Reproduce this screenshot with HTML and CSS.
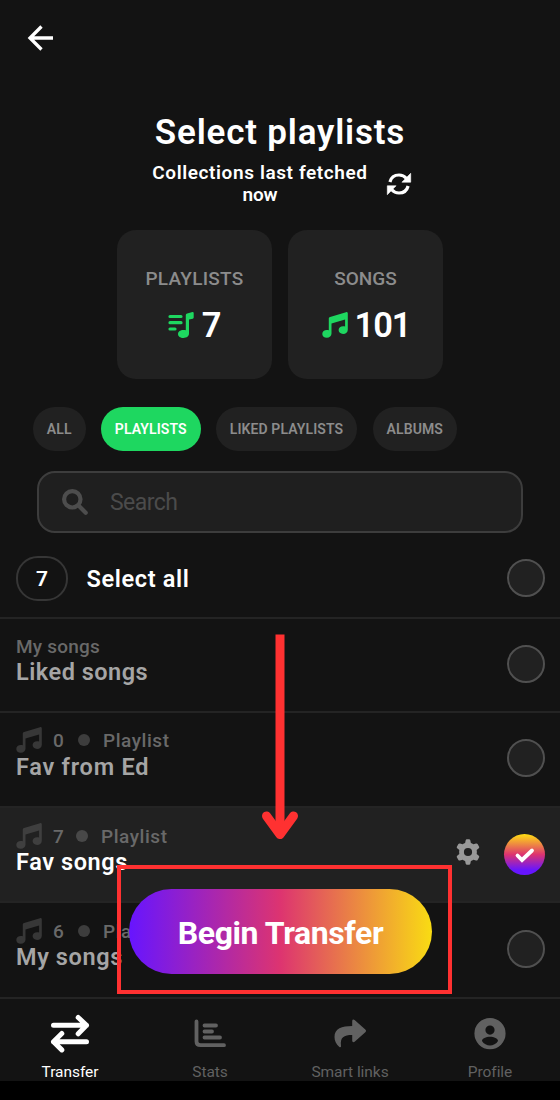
FILE: index.html
```html
<!DOCTYPE html>
<html lang="en">
<head>
<meta charset="utf-8">
<title>Select playlists</title>
<link rel="stylesheet" href="styles.css">
</head>
<body>
<svg class="defs" width="0" height="0" aria-hidden="true">
  <symbol id="note" viewBox="0 0 26 26">
    <path fill="currentColor" d="M24 .2c1-.3 1.800.3 1.800 1.300V17.800c0 2.600-2 4.200-4.700 4.200s-4.500-1.600-4.500-3.900 2-3.900 4.500-3.900c.8 0 1.400.1 2 .3V7.400L9.500 11.500v10c0 2.600-2 4.200-4.700 4.200S.3 24.100.3 21.900 2.300 18 4.800 18c.7 0 1.400.1 2 .3V6.800c0-.9.5-1.500 1.300-1.700z"/>
  </symbol>
</svg>
<main class="screen">
  <header class="topbar">
    <svg class="back" viewBox="0 0 26 26"><path d="M25 13H3M13.500 1.500 2 13l11.500 11.500"/></svg>
  </header>
  <h1 class="title">Select playlists</h1>
  <div class="fetched">
    <p class="fetched-text">Collections last fetched<br><span class="now">now</span></p>
    <svg class="refresh" viewBox="0 0 24 22"><path class="stroke" d="M2.900 9C4 4.800 7.500 2 12 2c3 0 5.600 1.300 7.500 3.500M21.100 13c-1.100 4.200-4.600 7-9.100 7-3 0-5.600-1.300-7.500-3.500"/><path class="solid" d="M23.700.3V9.200h-8.800zM.3 21.700v-8.900h8.800z"/></svg>
  </div>
  <section class="stats">
    <div class="stat"><div class="stat-name">PLAYLISTS</div>
      <div class="stat-value"><svg class="stat-icon" viewBox="0 0 26 26"><path class="bars" d="M2 4.500h11M2 10.700h11M2 17h5"/><path fill="currentColor" d="M24.500.1c.7-.1 1.200.2 1.200.9v4.600c0 .6-.4 1-.9 1.100l-3.800.9v13.900c0 2.500-2.200 4.400-5.600 4.400-3.100 0-5.400-1.600-5.400-4s2.300-4 5.400-4c1 0 1.700.1 2.400.4V3.200c0-1 .5-1.600 1.400-1.800z"/></svg><span>7</span></div></div>
    <div class="stat"><div class="stat-name songs-name">SONGS</div>
      <div class="stat-value songs-value"><svg class="stat-icon"><use href="#note"/></svg><span class="hundred">101</span></div></div>
  </section>
  <nav class="chips">
    <span class="chip chip-all">ALL</span><span class="chip chip-playlists active">PLAYLISTS</span><span class="chip chip-liked">LIKED PLAYLISTS</span><span class="chip chip-albums">ALBUMS</span>
  </nav>
  <div class="search">
    <svg class="search-icon" viewBox="0 0 26 26"><circle cx="10.300" cy="10.300" r="8.200"/><path d="m16.500 16.500 7.200 7.200"/></svg>
    <span>Search</span>
  </div>
  <section class="list">
    <div class="select-all"><span class="count">7</span><span class="select-label">Select all</span><i class="radio"></i></div>
    <div class="row row-liked"><div class="info"><div class="meta my-meta">My songs</div><div class="name liked-name">Liked songs</div></div><i class="radio"></i></div>
    <div class="row row-ed"><div class="info"><div class="meta"><svg class="note"><use href="#note"/></svg><span class="number">0</span><i class="dot"></i><span>Playlist</span></div><div class="name ed-name">Fav from Ed</div></div><i class="radio"></i></div>
    <div class="row row-fav"><div class="info"><div class="meta"><svg class="note"><use href="#note"/></svg><span class="number narrow">7</span><i class="dot"></i><span>Playlist</span></div><div class="name fav-name">Fav songs</div></div>
      <svg class="gear" viewBox="0 0 24 26"><path fill-rule="evenodd" d="M9.700 1.300C9.900.5 10.400.2 11 .2h2c.7 0 1.100.4 1.300 1.100l.6 2.700c.9.300 1.700.8 2.400 1.300l2.700-.8c.7-.2 1.200 0 1.600.6l1.400 2.400c.4.7.3 1.200-.2 1.700l-2.100 1.900a10 10 0 0 1 0 3.800l2.100 1.900c.5.5.6 1 .2 1.700l-1.400 2.400c-.4.6-.9.800-1.600.6l-2.700-.8c-.7.500-1.500 1-2.400 1.300l-.6 2.700c-.2.700-.6 1.100-1.300 1.100h-2c-.6 0-1.100-.4-1.300-1.100L9.100 22c-.9-.3-1.700-.8-2.400-1.300l-2.700.8c-.7.2-1.200 0-1.600-.6L1 18.500c-.4-.7-.3-1.200.2-1.700l2.100-1.900a10 10 0 0 1 0-3.800L1.200 9.200C.7 8.700.6 8.200 1 7.500l1.400-2.400C2.800 4.500 3.300 4.300 4 4.500l2.700.8c.7-.5 1.500-1 2.400-1.300zM12 8.900a4.100 4.100 0 1 0 0 8.200 4.100 4.100 0 0 0 0-8.200z"/></svg>
      <span class="checked"><svg viewBox="0 0 20 16"><path d="m2.500 8.500 4.500 4.500L17 3.500"/></svg></span></div>
    <div class="row row-my"><div class="info"><div class="meta"><svg class="note"><use href="#note"/></svg><span class="number">6</span><i class="dot"></i><span>Playlist</span></div><div class="name my-name">My songs</div></div><i class="radio"></i></div>
  </section>
  <nav class="tabs">
    <div class="tab current"><svg class="tab-icon" viewBox="0 0 40 40"><path class="line4" d="M3.500 12.300h33M28.200 4.500l8.300 7.800-8.300 8.500M36.500 28.700h-33M11.800 20.500l-8.300 8.200 8.300 8.200"/></svg><span>Transfer</span></div>
    <div class="tab"><svg class="tab-icon" viewBox="0 0 40 40"><path class="line4" d="M6.500 8.500v20q0 3.700 4 3.700H34M14.500 12.500h11.500M14.500 18.500h7.500M14.500 24.500h15.500"/></svg><span class="stats-label">Stats</span></div>
    <div class="tab"><svg class="tab-icon" viewBox="0 0 40 40"><path fill="currentColor" d="M22.200 8.200c0-1.700 1.200-2.200 2.400-1.200l10.700 9.500c1 .9 1 1.800 0 2.700l-10.700 9.500c-1.200 1-2.400.4-2.400-1.200v-5.400c-8.300 0-12.200 2.100-11.200 11 .1 1.200-.8 1.500-1.600.8C6 31 4.500 27.600 4.500 24c0-8.500 7.300-10.900 17.700-11z"/></svg><span class="links-label">Smart links</span></div>
    <div class="tab"><svg class="tab-icon" viewBox="0 0 40 40"><path fill="currentColor" fill-rule="evenodd" d="M20 5a15.600 15.600 0 1 0 0 31.200A15.600 15.600 0 0 0 20 5zm0 7.500a4.600 4.600 0 1 1 0 9.200 4.600 4.600 0 0 1 0-9.200zm0 11.300c4 0 8 1.800 8 4.200-1.600 2.800-5 4.500-8 4.500s-6.400-1.700-8-4.500c0-2.400 4-4.200 8-4.200z"/></svg><span>Profile</span></div>
  </nav>
  <button class="begin"><span>Begin Transfer</span></button>
  <div class="highlight"></div>
  <svg class="arrow" viewBox="0 0 40 210"><path class="shaft" d="M20 4.500V198"/><path class="head" d="m6.500 186 13.500 18.500L33.500 186"/></svg>
</main>
</body>
</html>
```
FILE: styles.css
```css
* { box-sizing: border-box; }
body { margin: 0; background: #000; font-family: Roboto, "Liberation Sans", sans-serif; font-weight: 600; color: #fff; }
.defs { position: absolute; }
.screen { position: relative; width: 560px; height: 1100px; overflow: hidden; background: linear-gradient(#131313 1081px, #000 1081px); }
svg { display: block; overflow: visible; flex: none; }
i { flex: none; }
.topbar { height: 112px; padding: 25px 28px; }
.back { width: 26px; height: 26px; fill: none; stroke: #fff; stroke-width: 3.300; }
.title { margin: 0; height: 48px; font-size: 35px; font-weight: 600; line-height: 42px; text-align: center; letter-spacing: .8px; white-space: nowrap; }
.fetched { display: flex; align-items: center; height: 48px; padding-left: 151px; gap: 18px; }
.fetched-text { margin: 0; width: 218px; font-size: 19px; line-height: 22px; letter-spacing: .6px; text-align: center; white-space: nowrap; }
.now { letter-spacing: -.1px; }
.refresh { width: 24px; height: 22px; }
.refresh .stroke { fill: none; stroke: #fff; stroke-width: 3.200; }
.refresh .solid { fill: #fff; stroke: #fff; stroke-width: .6; stroke-linejoin: round; }
.stats { display: flex; justify-content: center; gap: 16px; margin-top: 22px; height: 149px; }
.stat { width: 155px; border-radius: 19px; background: #212121; padding-top: 36px; text-align: center; }
.stat-name { height: 24px; color: #8c8c8c; font-size: 19px; font-weight: 500; line-height: 25px; letter-spacing: .25px; }
.songs-name { letter-spacing: 0; }
.stat-value { display: flex; align-items: center; justify-content: center; gap: 8px; height: 40px; margin-top: 15px; font-size: 34.500px; line-height: 40px; }
.songs-value { padding-left: 1px; gap: 7px; }
.hundred { letter-spacing: -1.100px; }
.stat-icon { width: 26px; height: 26px; color: #1ed760; }
.bars { fill: none; stroke: #1ed760; stroke-width: 3.200; stroke-linecap: round; }
.chips { display: flex; margin: 28px 0 20px 33px; height: 44px; font-size: 14px; gap: 15.500px; letter-spacing: .1px; }
.chip { display: flex; align-items: center; justify-content: center; border-radius: 22px; background: #212121; color: #8c8c8c; white-space: nowrap; }
.chip-all { width: 52.500px; }
.chip-playlists { width: 99.500px; }
.chip-liked { width: 141px; }
.chip-albums { width: 84.500px; }
.active { background: #1ed760; color: #fff; }
.search { display: flex; align-items: center; height: 62px; margin: 0 37px; padding-left: 23px; gap: 22px; border: 2px solid #3d3d3d; border-radius: 18px; background: #1f1f1f; color: #4b4b4b; font-size: 23px; font-weight: 400; letter-spacing: -.55px; }
.search-icon { width: 26px; height: 26px; fill: none; stroke: #4d4d4d; stroke-width: 4.200; stroke-linecap: round; }
.list { margin-top: 6px; }
.select-all { display: flex; align-items: center; height: 80px; padding: 0 15px 0 16px; border-bottom: 2px solid #242424; }
.count { display: flex; align-items: center; justify-content: center; width: 52px; height: 45px; margin-top: 1px; border: 2px solid #363636; border-radius: 22px; font-size: 21px; }
.select-label { margin-left: 18.500px; padding-top: 1px; font-size: 23.500px; letter-spacing: .65px; }
.radio { width: 38px; height: 38px; margin-left: auto; border: 2px solid #505050; border-radius: 50%; background: #212121; }
.row { display: flex; align-items: center; padding: 0 15px 0 16px; height: 95px; border-bottom: 2px solid #242424; }
.row-liked { height: 94px; padding-bottom: 3px; }
.row-ed { padding-bottom: 4px; }
.row-fav { background: #212121; }
.row-my { height: 96px; padding-bottom: 3px; }
.info { align-self: flex-start; padding-top: 14px; }
.row-fav .info, .row-my .info { padding-top: 15px; }
.meta { display: flex; align-items: center; height: 26px; color: #696969; font-size: 19px; font-weight: 500; letter-spacing: .55px; white-space: nowrap; }
.my-meta { letter-spacing: .2px; }
.note { width: 26px; height: 26px; color: #373737; }
.number { margin-left: 11px; width: 13px; }
.dot { width: 12px; height: 12px; margin: 0 13px 0 12px; border-radius: 50%; background: #3d3d3d; }
.narrow { width: 11px; }
.name { height: 26px; font-size: 23.500px; line-height: 27px; letter-spacing: .5px; color: #a5a5a5; white-space: nowrap; }
.ed-name { line-height: 28px; letter-spacing: .75px; }
.fav-name, .my-name { line-height: 27px; letter-spacing: .6px; }
.row-fav .name { color: #fff; }
.row-fav .note { color: #3f3f3f; }
.row-fav .dot { background: #484848; }
.gear { width: 24px; height: 26px; margin-left: auto; fill: #999; margin-bottom: 6px; }
.checked { display: flex; align-items: center; justify-content: center; width: 41px; height: 41px; margin-left: 24px; border-radius: 50%; background: linear-gradient(#ffdf12, #dd3470 50%, #6715ff 88%); }
.checked svg { width: 20px; height: 16px; fill: none; stroke: #fff; stroke-width: 3.800; stroke-linecap: round; stroke-linejoin: miter; }
.tabs { display: grid; grid-template-columns: repeat(4, 140px); height: 82px; }
.tab { display: flex; flex-direction: column; align-items: center; padding-top: 14px; color: #616161; font-size: 15.500px; font-weight: 400; line-height: 20px; letter-spacing: -.05px; }
.tab span { margin-top: 9px; white-space: nowrap; }
.tab-icon { width: 40px; height: 40px; }
.line4 { fill: none; stroke: currentColor; stroke-width: 3.800; stroke-linecap: round; stroke-linejoin: round; }
.current { color: #fff; }
.current .line4 { stroke-width: 5; }
/* The floating action and its callout lie over the list. */
.begin { position: absolute; left: 129px; top: 889px; width: 303px; height: 85px; border: 0; border-radius: 43px; padding: 3px 0 0; color: #fff; background: linear-gradient(90deg, #6715ff, #dd3470 50%, #f9dc13); font: 700 32px Roboto, sans-serif; letter-spacing: -.4px; white-space: nowrap; }
.highlight { position: absolute; left: 117px; top: 865px; width: 335px; height: 129px; border: 4.500px solid #ff3131; }
.arrow { position: absolute; left: 260px; top: 630px; width: 40px; height: 210px; fill: none; stroke: #ff3131; stroke-width: 9; stroke-linejoin: round; }
.arrow .head { stroke-linecap: round; }
```
